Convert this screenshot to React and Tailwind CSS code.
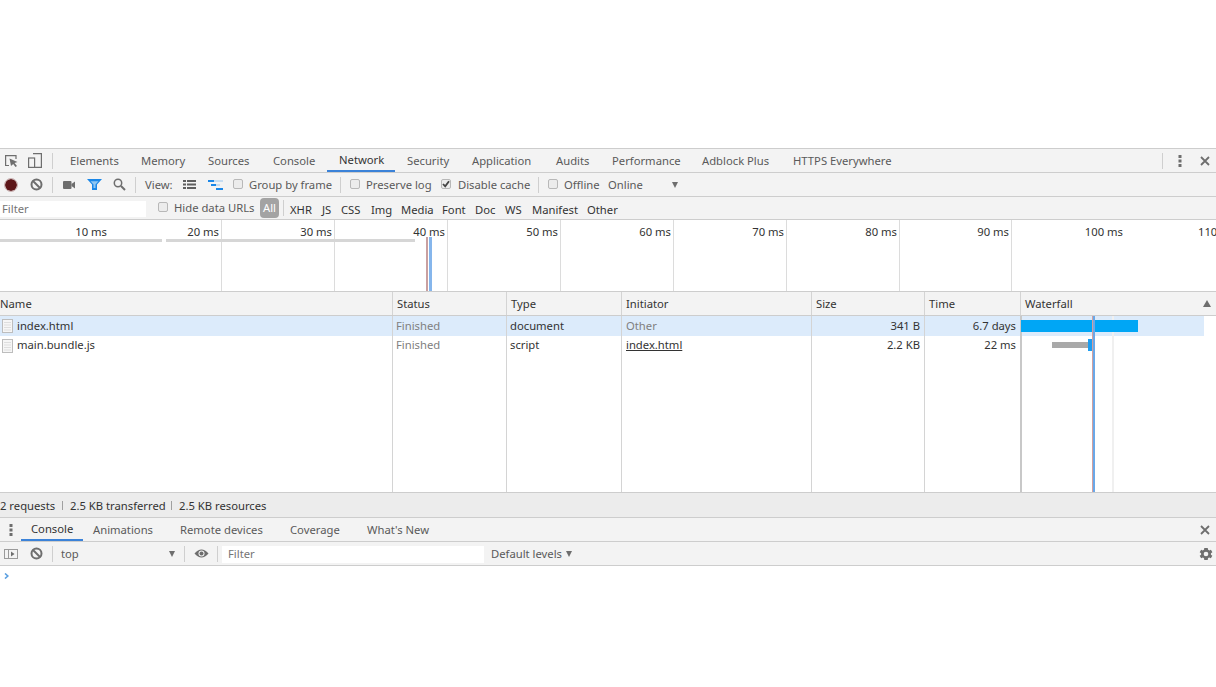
import React from 'react';

const Sep = ({ className = '' }) => <div className={`w-px h-[16px] bg-[#cfcfcf] ${className}`} />;

const Check = ({ checked }) => (
  <div className="w-[10px] h-[10px] mt-[-2px] shrink-0 rounded-[2px] border border-[#b8b8b8] bg-[#ececec] flex items-center justify-center">
    {checked && (
      <svg width="8" height="8" viewBox="0 0 8 8">
        <path d="M1 4 L3.2 6.4 L7 1.2" fill="none" stroke="#444" strokeWidth="1.8" />
      </svg>
    )}
  </div>
);

const ClearIcon = () => (
  <svg width="13" height="13" viewBox="0 0 13 13">
    <circle cx="6.5" cy="6.5" r="5" fill="none" stroke="#6e6e6e" strokeWidth="2" />
    <path d="M3 3 L10 10" stroke="#6e6e6e" strokeWidth="2" />
  </svg>
);

const DotsIcon = () => (
  <svg width="4" height="14" viewBox="0 0 4 14">
    <rect x="0.5" y="1" width="3" height="3" fill="#6e6e6e" />
    <rect x="0.5" y="5.5" width="3" height="3" fill="#6e6e6e" />
    <rect x="0.5" y="10" width="3" height="3" fill="#6e6e6e" />
  </svg>
);

const CloseIcon = () => (
  <svg width="10" height="10" viewBox="0 0 10 10">
    <path d="M1 1 L9 9 M9 1 L1 9" stroke="#6e6e6e" strokeWidth="1.8" />
  </svg>
);

const FileIcon = () => (
  <svg width="11" height="14" viewBox="0 0 11 14">
    <rect x="0.5" y="0.5" width="10" height="13" fill="#f6f6f6" stroke="#bdbdbd" />
    <path d="M2 3.5 H9 M2 6 H9 M2 8.5 H9 M2 11 H9" stroke="#dedede" />
  </svg>
);

const mainTabs = [
  { label: 'Elements', w: 'w-[71px]' },
  { label: 'Memory', w: 'w-[67px]' },
  { label: 'Sources', w: 'w-[65px]' },
  { label: 'Console', w: 'w-[66px]' },
  { label: 'Network', w: 'w-[68px]', active: true },
  { label: 'Security', w: 'w-[65px]' },
  { label: 'Application', w: 'w-[84px]' },
  { label: 'Audits', w: 'w-[56px]' },
  { label: 'Performance', w: 'w-[90px]' },
  { label: 'Adblock Plus', w: 'w-[91px]' },
  { label: 'HTTPS Everywhere', w: 'w-[120px]' },
];

const typeFilters = [
  { label: 'XHR', w: 'w-[32px]' },
  { label: 'JS', w: 'w-[19px]' },
  { label: 'CSS', w: 'w-[30px]' },
  { label: 'Img', w: 'w-[30px]' },
  { label: 'Media', w: 'w-[41px]' },
  { label: 'Font', w: 'w-[33px]' },
  { label: 'Doc', w: 'w-[30px]' },
  { label: 'WS', w: 'w-[27px]' },
  { label: 'Manifest', w: 'w-[55px]' },
  { label: 'Other', w: 'w-[40px]' },
];

const ticks = [
  { label: '10 ms', w: 'w-[109px]' },
  { label: '20 ms', w: 'w-[113px]', line: true },
  { label: '30 ms', w: 'w-[113px]', line: true },
  { label: '40 ms', w: 'w-[113px]', line: true },
  { label: '50 ms', w: 'w-[113px]', line: true },
  { label: '60 ms', w: 'w-[113px]', line: true },
  { label: '70 ms', w: 'w-[113px]', line: true },
  { label: '80 ms', w: 'w-[113px]', line: true },
  { label: '90 ms', w: 'w-[112px]', line: true },
  { label: '100 ms', w: 'w-[113px]' },
];

const bottomTabs = [
  { label: 'Console', w: 'w-[62px]', active: true },
  { label: 'Animations', w: 'w-[87px]' },
  { label: 'Remote devices', w: 'w-[110px]' },
  { label: 'Coverage', w: 'w-[77px]' },
  { label: "What's New", w: 'w-[90px]' },
];

const cols = ['w-[393px]', 'w-[114px]', 'w-[115px]', 'w-[190px]', 'w-[113px]', 'w-[96px]'];
const headPad = ['pl-[0px]', 'pl-[4px]', 'pl-[4px]', 'pl-[4px]', 'pl-[4px]', 'pl-[4px]'];

const rows = [
  { name: 'index.html', status: 'Finished', type: 'document', initiator: 'Other', size: '341 B', time: '6.7 days', selected: true },
  { name: 'main.bundle.js', status: 'Finished', type: 'script', initiator: 'index.html', link: true, size: '2.2 KB', time: '22 ms' },
];

const cell = 'h-full shrink-0 border-r border-[#d4d4d4] flex items-center overflow-hidden';

export default function App() {
  return (
    <div className="w-[1216px] h-[687px] overflow-hidden bg-white flex flex-col text-[11.25px] leading-[18px] text-[#333] font-['Noto_Sans',sans-serif]">
      <div className="h-[148px] shrink-0 border-b border-[#cdcdcd] box-content" />

      {/* main tabs */}
      <div className="h-[24px] shrink-0 flex items-center bg-[#f3f3f3] border-b border-[#cdcdcd]">
        <div className="w-[25px] pl-[5px]">
          <svg width="13" height="12" viewBox="0 0 13 12" className="block">
            <path d="M4 10.5 H0.6 V0.6 H11 V4" fill="none" stroke="#6e6e6e" strokeWidth="1.2" />
            <path d="M4.5 3.5 L12.5 7 L9.5 8 L12 11 L10.5 12 L8.2 9 L6 11 Z" fill="#6e6e6e" />
          </svg>
        </div>
        <div className="w-[20px] flex justify-center">
          <svg width="14" height="15" viewBox="0 0 14 15">
            <path d="M5 0.6 H13.4 V14.4 H7" fill="none" stroke="#6e6e6e" strokeWidth="1.2" />
            <rect x="0.6" y="5" width="6" height="9.4" fill="none" stroke="#6e6e6e" strokeWidth="1.2" />
          </svg>
        </div>
        <Sep className="ml-[7px]" />
        <div className="w-[5px]" />
        <div className="flex h-full">
          {mainTabs.map((t) => (
            <div
              key={t.label}
              className={`${t.w} h-full shrink-0 pl-[12px] flex items-center whitespace-nowrap ${t.active ? 'border-b-2 border-[#3b82d8] text-[#333]' : 'text-[#5a5a5a]'}`}
            >
              {t.label}
            </div>
          ))}
        </div>
        <div className="flex-1" />
        <Sep />
        <div className="w-[34px] flex justify-center">
          <DotsIcon />
        </div>
        <div className="w-[18px] pl-[3px] mr-[1px]">
          <CloseIcon />
        </div>
      </div>

      {/* network toolbar */}
      <div className="h-[24px] shrink-0 flex items-center bg-[#f3f3f3] border-b border-[#cdcdcd] text-[#5a5a5a] whitespace-nowrap">
        <div className="w-[21px] flex justify-center">
          <div className="w-[12px] h-[12px] rounded-full bg-[#5c1518] outline outline-1 outline-[#c9b0b0]" />
        </div>
        <div className="w-[28px] flex justify-center pl-[2px]">
          <ClearIcon />
        </div>
        <Sep className="ml-[3px]" />
        <div className="w-[31px] flex justify-center">
          <svg width="12" height="8" viewBox="0 0 12 8">
            <rect x="0" y="0" width="8.5" height="8" rx="1" fill="#6e6e6e" />
            <path d="M8.5 3 L12 0.5 V7.5 L8.5 5 Z" fill="#6e6e6e" />
          </svg>
        </div>
        <div className="w-[18px] flex justify-center pl-[2px]">
          <svg width="15" height="11" viewBox="0 0 15 11">
            <path d="M0 0 H15 L10 5.5 V11 H5 V5.5 Z" fill="#1a87e8" />
            <path d="M3.5 2.2 H11.5 L8.5 5.5 V9 H6.5 V5.5 Z" fill="#8fc6f2" />
          </svg>
        </div>
        <div className="w-[33px] flex justify-center pl-[2px]">
          <svg width="13" height="13" viewBox="0 0 13 13">
            <circle cx="5" cy="5" r="3.7" fill="none" stroke="#6e6e6e" strokeWidth="1.5" />
            <path d="M8 8 L12 12" stroke="#6e6e6e" strokeWidth="2" />
          </svg>
        </div>
        <Sep />
        <div className="w-[47px] pl-[9px]">View:</div>
        <div className="w-[13px] flex justify-center mr-[11px]">
          <svg width="13" height="9" viewBox="0 0 13 9">
            <path d="M0 0 H3 V2 H0 Z M4 0 H13 V2 H4 Z M0 3.5 H3 V5.5 H0 Z M4 3.5 H13 V5.5 H4 Z M0 7 H3 V9 H0 Z M4 7 H13 V9 H4 Z" fill="#5f5f5f" />
          </svg>
        </div>
        <div className="w-[16px] flex justify-center mr-[10px]">
          <svg width="15" height="10" viewBox="0 0 15 10">
            <path d="M0 0 H6 V2 H0 Z M3 4 H8 V6 H3 Z M8 8 H15 V10 H8 Z" fill="#1a87e8" />
            <path d="M6 0 H15 V2 H6 Z M8 4 H12 V6 H8 Z" fill="#c6dcf0" />
          </svg>
        </div>
        <Check />
        <div className="w-[97px] pl-[6px]">Group by frame</div>
        <Sep />
        <div className="w-[9px]" />
        <Check />
        <div className="w-[81px] pl-[6px]">Preserve log</div>
        <Check checked />
        <div className="w-[87px] pl-[7px]">Disable cache</div>
        <Sep />
        <div className="w-[9px]" />
        <Check />
        <div className="w-[50px] pl-[6px]">Offline</div>
        <div className="w-[64px]">Online</div>
        <div className="w-0 h-0 border-x-[3.5px] border-x-transparent border-t-[6px] border-t-[#6e6e6e]" />
      </div>

      {/* filter bar */}
      <div className="h-[23px] shrink-0 flex items-center bg-[#f3f3f3] border-b border-[#cdcdcd] whitespace-nowrap">
        <div className="w-[146px] h-[16px] bg-white pl-[2px] flex items-center text-[#757575] mt-[1px]">Filter</div>
        <div className="w-[12px]" />
        <Check />
        <div className="w-[92px] pl-[6px] text-[#5a5a5a]">Hide data URLs</div>
        <div className="w-[19px] h-[20px] rounded-[4px] bg-[#a3a3a3] text-white flex items-center justify-center">All</div>
        <Sep className="ml-[4px] mr-[6px]" />
        {typeFilters.map((f) => (
          <div key={f.label} className={`${f.w} shrink-0 mt-[3px] text-[#333]`}>
            {f.label}
          </div>
        ))}
      </div>

      {/* overview */}
      <div className="h-[72px] shrink-0 relative overflow-hidden flex border-b border-[#cdcdcd] whitespace-nowrap">
        {ticks.map((t) => (
          <div
            key={t.label}
            className={`${t.w} shrink-0 h-full pt-[3px] pr-[2px] flex justify-end items-start ${t.line ? 'border-r border-[#dcdcdc]' : ''}`}
          >
            {t.label}
          </div>
        ))}
        <div className="shrink-0 h-full pt-[3px] pl-[73px]">110</div>
        <div className="absolute left-0 top-[19px] w-[162px] h-[3px] bg-[#d6d6d6]" />
        <div className="absolute left-[166px] top-[19px] w-[249px] h-[3px] bg-[#d6d6d6]" />
        <div className="absolute left-[426px] top-[17px] w-[2px] h-[54px] bg-[#c9a0a0]" />
        <div className="absolute left-[429px] top-[17px] w-[3px] h-[54px] bg-[#86b6ec]" />
      </div>

      {/* table */}
      <div className="h-[24px] shrink-0 flex bg-[#f3f3f3] border-b border-[#cdcdcd] relative whitespace-nowrap">
        {['Name', 'Status', 'Type', 'Initiator', 'Size', 'Time'].map((h, i) => (
          <div key={h} className={`${cols[i]} ${cell} ${headPad[i]}`}>
            {h}
          </div>
        ))}
        <div className="flex-1 flex items-center justify-between pl-[4px] pr-[5px]">
          Waterfall
          <div className="w-0 h-0 border-x-[4px] border-x-transparent border-b-[7px] border-b-[#6e6e6e]" />
        </div>
      </div>
      <div className="h-[176px] shrink-0 flex flex-col relative whitespace-nowrap">
        {rows.map((r) => (
          <div key={r.name} className={`h-[20px] shrink-0 flex ${r.selected ? 'w-[1204px] bg-[#dcebfb]' : ''}`}>
            <div className={`${cols[0]} ${cell} pl-[2px] gap-[4px]`}>
              <FileIcon />
              <span className={r.selected ? '' : 'mb-[2px]'}>{r.name}</span>
            </div>
            <div className={`${cols[1]} ${cell} pl-[3px] text-[#808080] ${r.selected ? '' : 'pb-[2px]'}`}>{r.status}</div>
            <div className={`${cols[2]} ${cell} pl-[3px] ${r.selected ? '' : 'pb-[2px]'}`}>{r.type}</div>
            <div className={`${cols[3]} ${cell} pl-[4px] ${r.link ? 'pb-[2px]' : ''}`}>
              <span className={r.link ? 'underline' : 'text-[#808080]'}>{r.initiator}</span>
            </div>
            <div className={`${cols[4]} ${cell} justify-end pr-[4px] ${r.selected ? '' : 'pb-[2px]'}`}>{r.size}</div>
            <div className={`${cols[5]} ${cell} justify-end pr-[4px] ${r.selected ? '' : 'pb-[2px]'}`}>{r.time}</div>
          </div>
        ))}
        <div className="flex-1 flex">
          {cols.map((c) => (
            <div key={c} className={`${c} ${cell}`} />
          ))}
        </div>
        <div className="absolute left-[1020px] top-0 w-[2px] h-full bg-[#c8c8c8]" />
        <div className="absolute left-[1112px] top-0 w-[2px] h-full bg-[#f0f0f0]" />
        <div className="absolute left-[1021px] top-[4px] w-[117px] h-[12px] bg-[#00a6f5]" />
        <div className="absolute left-[1052px] top-[26px] w-[36px] h-[6px] bg-[#a9a9a9]" />
        <div className="absolute left-[1088px] top-[23px] w-[4px] h-[12px] bg-[#1c9df0]" />
        <div className="absolute left-[1092px] top-0 w-px h-full bg-[#d2a0a0]" />
        <div className="absolute left-[1093px] top-0 w-[2px] h-full bg-[#6aa8e8]" />
      </div>

      {/* status */}
      <div className="h-[26px] shrink-0 flex items-center bg-[#ececec] border-y border-[#cdcdcd] whitespace-nowrap">
        <div className="w-[62px] pt-[2px]">2 requests</div>
        <div className="w-px h-[9px] bg-[#a0a0a0]" />
        <div className="w-[108px] pl-[7px] pt-[2px]">2.5 KB transferred</div>
        <div className="w-px h-[9px] bg-[#a0a0a0]" />
        <div className="pl-[7px] pt-[2px]">2.5 KB resources</div>
      </div>

      {/* drawer tabs */}
      <div className="h-[24px] shrink-0 flex items-center bg-[#f3f3f3] border-b border-[#cdcdcd] whitespace-nowrap">
        <div className="w-[21px] flex justify-center">
          <DotsIcon />
        </div>
        <div className="flex h-full flex-1">
          {bottomTabs.map((t) => (
            <div
              key={t.label}
              className={`${t.w} h-full shrink-0 pl-[10px] flex items-center ${t.active ? 'border-b-2 border-[#3b82d8] text-[#333]' : 'text-[#5a5a5a]'}`}
            >
              {t.label}
            </div>
          ))}
        </div>
        <div className="w-[18px] pl-[3px] mr-[1px]">
          <CloseIcon />
        </div>
      </div>

      {/* console toolbar */}
      <div className="h-[24px] shrink-0 flex items-center bg-[#f3f3f3] border-b border-[#cdcdcd] text-[#5a5a5a] whitespace-nowrap">
        <div className="w-[21px] flex justify-center">
          <svg width="14" height="10" viewBox="0 0 14 10">
            <rect x="0.5" y="0.5" width="13" height="9" fill="none" stroke="#9a9a9a" />
            <path d="M4.5 1 V9" stroke="#9a9a9a" />
            <path d="M7 2.5 L10.5 5 L7 7.5 Z" fill="#6e6e6e" />
          </svg>
        </div>
        <div className="w-[28px] flex justify-center pl-[2px]">
          <ClearIcon />
        </div>
        <Sep className="ml-[3px]" />
        <div className="w-[116px] pl-[8px]">top</div>
        <div className="w-0 h-0 border-x-[3.5px] border-x-transparent border-t-[6px] border-t-[#6e6e6e]" />
        <div className="w-[9px]" />
        <Sep />
        <div className="w-[32px] flex justify-center">
          <svg width="15" height="11" viewBox="0 0 15 11">
            <path d="M0.5 5.5 Q7.5 -2.5 14.5 5.5 Q7.5 13.5 0.5 5.5 Z" fill="#6e6e6e" />
            <circle cx="7.5" cy="5.5" r="3" fill="#f3f3f3" />
            <circle cx="7.5" cy="5.5" r="2" fill="#6e6e6e" />
          </svg>
        </div>
        <Sep />
        <div className="w-[4px]" />
        <div className="w-[262px] h-[17px] bg-white pl-[6px] flex items-center text-[#757575] mt-[1px]">Filter</div>
        <div className="w-[82px] pl-[7px]">Default levels</div>
        <div className="w-0 h-0 border-x-[3.5px] border-x-transparent border-t-[6px] border-t-[#6e6e6e]" />
        <div className="flex-1" />
        <div className="w-[18px]">
          <svg width="16" height="16" viewBox="0 0 24 24" className="block">
            <path
              fill="#6e6e6e"
              d="M19.4 13a7.6 7.6 0 0 0 0-2l2.2-1.7-2.2-3.7-2.6 1a7.5 7.5 0 0 0-1.7-1L14.6 2.9h-5.2l-.4 2.7a7.5 7.5 0 0 0-1.7 1l-2.6-1-2.2 3.7L4.7 11a7.6 7.6 0 0 0 0 2l-2.2 1.7 2.2 3.7 2.6-1a7.5 7.5 0 0 0 1.7 1l.4 2.7h5.2l.4-2.7a7.5 7.5 0 0 0 1.7-1l2.6 1 2.2-3.7zM12 15.5a3.5 3.5 0 1 1 0-7 3.5 3.5 0 0 1 0 7z"
            />
          </svg>
        </div>
      </div>

      {/* console prompt */}
      <div className="flex-1 bg-white pl-[4px] pt-[7px]">
        <svg width="5" height="6" viewBox="0 0 5 6" className="block">
          <path d="M1 0.5 L3.8 3 L1 5.5" fill="none" stroke="#5a9fe0" strokeWidth="1.6" />
        </svg>
      </div>
    </div>
  );
}
